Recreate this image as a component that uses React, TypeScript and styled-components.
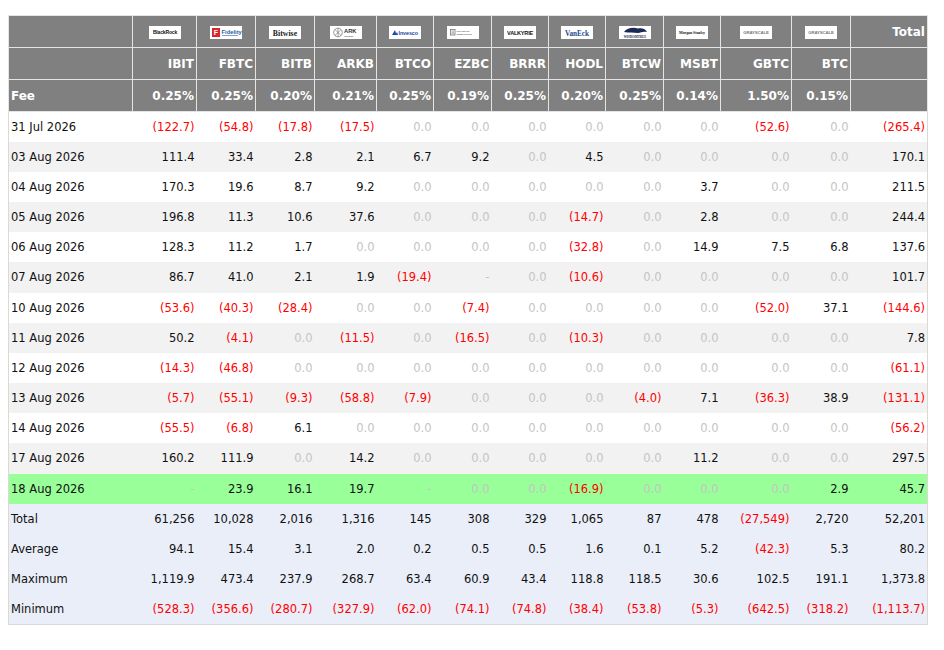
import React from 'react';
import styled, { createGlobalStyle } from 'styled-components';

type Tone = 'plain' | 'neg' | 'muted';
type RowKind = 'odd' | 'even' | 'today' | 'summary';

type Fund = {
  ticker: string;
  fee: string;
  logo: string;
  width: number;
};

const funds: Fund[] = [
  { ticker: 'IBIT', fee: '0.25%', logo: 'blackrock', width: 64 },
  { ticker: 'FBTC', fee: '0.25%', logo: 'fidelity', width: 59 },
  { ticker: 'BITB', fee: '0.20%', logo: 'bitwise', width: 59 },
  { ticker: 'ARKB', fee: '0.21%', logo: 'ark', width: 62 },
  { ticker: 'BTCO', fee: '0.25%', logo: 'invesco', width: 57 },
  { ticker: 'EZBC', fee: '0.19%', logo: 'franklin', width: 58 },
  { ticker: 'BRRR', fee: '0.25%', logo: 'valkyrie', width: 57 },
  { ticker: 'HODL', fee: '0.20%', logo: 'vaneck', width: 57 },
  { ticker: 'BTCW', fee: '0.25%', logo: 'wisdomtree', width: 58 },
  { ticker: 'MSBT', fee: '0.14%', logo: 'morgan', width: 57 },
  { ticker: 'GBTC', fee: '1.50%', logo: 'grayscale', width: 71 },
  { ticker: 'BTC', fee: '0.15%', logo: 'grayscale', width: 59 },
];

const rows: { label: string; kind: RowKind; values: string[] }[] = [
  { label: '31 Jul 2026', kind: 'odd', values: ['(122.7)', '(54.8)', '(17.8)', '(17.5)', '0.0', '0.0', '0.0', '0.0', '0.0', '0.0', '(52.6)', '0.0', '(265.4)'] },
  { label: '03 Aug 2026', kind: 'even', values: ['111.4', '33.4', '2.8', '2.1', '6.7', '9.2', '0.0', '4.5', '0.0', '0.0', '0.0', '0.0', '170.1'] },
  { label: '04 Aug 2026', kind: 'odd', values: ['170.3', '19.6', '8.7', '9.2', '0.0', '0.0', '0.0', '0.0', '0.0', '3.7', '0.0', '0.0', '211.5'] },
  { label: '05 Aug 2026', kind: 'even', values: ['196.8', '11.3', '10.6', '37.6', '0.0', '0.0', '0.0', '(14.7)', '0.0', '2.8', '0.0', '0.0', '244.4'] },
  { label: '06 Aug 2026', kind: 'odd', values: ['128.3', '11.2', '1.7', '0.0', '0.0', '0.0', '0.0', '(32.8)', '0.0', '14.9', '7.5', '6.8', '137.6'] },
  { label: '07 Aug 2026', kind: 'even', values: ['86.7', '41.0', '2.1', '1.9', '(19.4)', '-', '0.0', '(10.6)', '0.0', '0.0', '0.0', '0.0', '101.7'] },
  { label: '10 Aug 2026', kind: 'odd', values: ['(53.6)', '(40.3)', '(28.4)', '0.0', '0.0', '(7.4)', '0.0', '0.0', '0.0', '0.0', '(52.0)', '37.1', '(144.6)'] },
  { label: '11 Aug 2026', kind: 'even', values: ['50.2', '(4.1)', '0.0', '(11.5)', '0.0', '(16.5)', '0.0', '(10.3)', '0.0', '0.0', '0.0', '0.0', '7.8'] },
  { label: '12 Aug 2026', kind: 'odd', values: ['(14.3)', '(46.8)', '0.0', '0.0', '0.0', '0.0', '0.0', '0.0', '0.0', '0.0', '0.0', '0.0', '(61.1)'] },
  { label: '13 Aug 2026', kind: 'even', values: ['(5.7)', '(55.1)', '(9.3)', '(58.8)', '(7.9)', '0.0', '0.0', '0.0', '(4.0)', '7.1', '(36.3)', '38.9', '(131.1)'] },
  { label: '14 Aug 2026', kind: 'odd', values: ['(55.5)', '(6.8)', '6.1', '0.0', '0.0', '0.0', '0.0', '0.0', '0.0', '0.0', '0.0', '0.0', '(56.2)'] },
  { label: '17 Aug 2026', kind: 'even', values: ['160.2', '111.9', '0.0', '14.2', '0.0', '0.0', '0.0', '0.0', '0.0', '11.2', '0.0', '0.0', '297.5'] },
  { label: '18 Aug 2026', kind: 'today', values: ['-', '23.9', '16.1', '19.7', '-', '0.0', '0.0', '(16.9)', '0.0', '0.0', '0.0', '2.9', '45.7'] },
  { label: 'Total', kind: 'summary', values: ['61,256', '10,028', '2,016', '1,316', '145', '308', '329', '1,065', '87', '478', '(27,549)', '2,720', '52,201'] },
  { label: 'Average', kind: 'summary', values: ['94.1', '15.4', '3.1', '2.0', '0.2', '0.5', '0.5', '1.6', '0.1', '5.2', '(42.3)', '5.3', '80.2'] },
  { label: 'Maximum', kind: 'summary', values: ['1,119.9', '473.4', '237.9', '268.7', '63.4', '60.9', '43.4', '118.8', '118.5', '30.6', '102.5', '191.1', '1,373.8'] },
  { label: 'Minimum', kind: 'summary', values: ['(528.3)', '(356.6)', '(280.7)', '(327.9)', '(62.0)', '(74.1)', '(74.8)', '(38.4)', '(53.8)', '(5.3)', '(642.5)', '(318.2)', '(1,113.7)'] },
];

const toneOf = (v: string): Tone => {
  if (v.startsWith('(')) return 'neg';
  if (v === '0.0' || v === '-') return 'muted';
  return 'plain';
};

const rowBg: Record<RowKind, string> = {
  odd: '#ffffff',
  even: '#f2f2f2',
  today: '#99ff99',
  summary: '#eaeef8',
};

const toneColor: Record<Tone, string> = {
  plain: '#111111',
  neg: '#ff0000',
  muted: '#c4c4c4',
};

const GlobalStyle = createGlobalStyle`
  html, body {
    margin: 0;
    padding: 0;
    background: #ffffff;
  }
  body {
    font-family: "DejaVu Sans", Verdana, sans-serif;
  }
`;

const Page = styled.div`
  padding: 15px 0 0 8px;
`;

const Table = styled.table`
  width: 920px;
  table-layout: fixed;
  border-collapse: collapse;
  border: 1px solid #dcd9d2;
  font-size: 11.5px;
`;

const HeadRow = styled.tr`
  height: 32px;
`;

const HeadCell = styled.th<{ $align?: 'left' | 'right' | 'center' }>`
  background: #808080;
  color: #ffffff;
  font-size: 12px;
  font-weight: bold;
  text-align: ${(p) => p.$align || 'right'};
  padding: 0 2px;
  border: 1px solid #e4e4e4;
  white-space: nowrap;
`;

const LogoCell = styled(HeadCell)`
  padding: 1px 0 0;
  line-height: 0;
`;

const BodyRow = styled.tr<{ $kind: RowKind }>`
  height: 30.18px;
  background: ${(p) => rowBg[p.$kind]};
`;

const LabelCell = styled.td`
  text-align: left;
  padding: 0 2px;
  color: #111111;
  white-space: nowrap;
`;

const ValueCell = styled.td<{ $tone: Tone }>`
  text-align: right;
  padding: 0 2px;
  color: ${(p) => toneColor[p.$tone]};
  white-space: nowrap;
`;

const LogoSvg = styled.svg`
  display: inline-block;
  width: 32px;
  height: 13px;
`;

const Logo: React.FC<{ name: string }> = ({ name }) => {
  let art: React.ReactNode = null;
  switch (name) {
    case 'blackrock':
      art = (
        <text x="16" y="8.4" fontSize="5" fontWeight="bold" textAnchor="middle" fill="#111" fontFamily="Liberation Sans, sans-serif" letterSpacing="-0.15">
          BlackRock
        </text>
      );
      break;
    case 'fidelity':
      art = (
        <>
          <rect x="2" y="2" width="8" height="9" fill="#d9262c" />
          <text x="6" y="9.2" fontSize="7" fontWeight="bold" textAnchor="middle" fill="#fff" fontFamily="Liberation Sans, sans-serif">F</text>
          <text x="11.5" y="7.6" fontSize="5.8" fontWeight="bold" fill="#2a62a8" fontFamily="Liberation Sans, sans-serif">Fidelity</text>
          <rect x="12" y="9.2" width="16" height="0.6" fill="#2a62a8" />
        </>
      );
      break;
    case 'bitwise':
      art = (
        <text x="16" y="9.6" fontSize="7.8" textAnchor="middle" fill="#222" fontFamily="Liberation Serif, serif">
          Bitwise
        </text>
      );
      break;
    case 'ark':
      art = (
        <>
          <circle cx="8" cy="6.5" r="4.3" fill="none" stroke="#555" strokeWidth="0.6" />
          <path d="M5 9.5 L11 3.5 M5 3.5 L11 9.5 M8 2.2 V10.8" stroke="#555" strokeWidth="0.5" />
          <text x="14" y="6.8" fontSize="5.8" fill="#333" fontFamily="Liberation Sans, sans-serif">ARK</text>
          <text x="14.3" y="10.8" fontSize="2.5" fill="#555" fontFamily="Liberation Sans, sans-serif">INVEST</text>
        </>
      );
      break;
    case 'invesco':
      art = (
        <>
          <path d="M3 9 L6 4 L7.5 9 Z M6.2 9 L8 6 L9 9 Z" fill="#1c4aa8" />
          <text x="9.5" y="8.6" fontSize="5.4" fontWeight="bold" fill="#1c4aa8" fontFamily="Liberation Sans, sans-serif" letterSpacing="-0.1">Invesco</text>
        </>
      );
      break;
    case 'franklin':
      art = (
        <>
          <rect x="3.5" y="3.5" width="4.5" height="5.5" fill="none" stroke="#666" strokeWidth="0.7" />
          <path d="M4.5 5 H7 M4.5 6.3 H7 M4.5 7.6 H7" stroke="#666" strokeWidth="0.5" />
          <text x="9.5" y="5.8" fontSize="2.5" fill="#666" fontFamily="Liberation Sans, sans-serif">FRANKLIN</text>
          <text x="9.5" y="9" fontSize="2.5" fill="#666" fontFamily="Liberation Sans, sans-serif">TEMPLETON</text>
        </>
      );
      break;
    case 'valkyrie':
      art = (
        <text x="16" y="8.8" fontSize="5.6" fontWeight="bold" textAnchor="middle" fill="#111" fontFamily="Liberation Sans, sans-serif" letterSpacing="-0.25">
          VALKYRIE
        </text>
      );
      break;
    case 'vaneck':
      art = (
        <text x="16" y="9.5" fontSize="7.2" fontWeight="bold" textAnchor="middle" fill="#1d4b8f" fontFamily="Liberation Serif, serif">
          VanEck
        </text>
      );
      break;
    case 'wisdomtree':
      art = (
        <>
          <path d="M5 6 C8 1.5 15 1 19 2.5 C23 1.5 27 3.5 28 6 C24 5 22 6.5 19 7 C15 6.5 10 7 5 6 Z" fill="#1b2a55" />
          <text x="16" y="11.6" fontSize="3.2" textAnchor="middle" fill="#1b2a55" fontFamily="Liberation Serif, serif">WISDOMTREE</text>
        </>
      );
      break;
    case 'morgan':
      art = (
        <text x="16" y="8.2" fontSize="4" textAnchor="middle" fill="#222" fontFamily="Liberation Serif, serif" letterSpacing="-0.1">
          Morgan Stanley
        </text>
      );
      break;
    case 'grayscale':
      art = (
        <text x="16" y="8.3" fontSize="4.3" textAnchor="middle" fill="#7a7a7a" fontFamily="Liberation Sans, sans-serif" letterSpacing="-0.1">
          GRAYSCALE
        </text>
      );
      break;
  }
  return (
    <LogoSvg viewBox="0 0 32 13">
      <rect width="32" height="13" fill="#ffffff" />
      {art}
    </LogoSvg>
  );
};

export default function App() {
  return (
    <>
      <GlobalStyle />
      <Page>
        <Table>
          <colgroup>
            <col style={{ width: 124 }} />
            {funds.map((f, i) => (
              <col key={i} style={{ width: f.width }} />
            ))}
            <col style={{ width: 77 }} />
          </colgroup>
          <thead>
            <HeadRow>
              <HeadCell />
              {funds.map((f, i) => (
                <LogoCell key={i} $align="center">
                  <Logo name={f.logo} />
                </LogoCell>
              ))}
              <HeadCell>Total</HeadCell>
            </HeadRow>
            <HeadRow>
              <HeadCell />
              {funds.map((f) => (
                <HeadCell key={f.ticker}>{f.ticker}</HeadCell>
              ))}
              <HeadCell />
            </HeadRow>
            <HeadRow>
              <HeadCell $align="left">Fee</HeadCell>
              {funds.map((f) => (
                <HeadCell key={f.ticker}>{f.fee}</HeadCell>
              ))}
              <HeadCell />
            </HeadRow>
          </thead>
          <tbody>
            {rows.map((r) => (
              <BodyRow key={r.label} $kind={r.kind}>
                <LabelCell>{r.label}</LabelCell>
                {r.values.map((v, i) => (
                  <ValueCell key={i} $tone={r.kind === 'summary' && v === '0.0' ? 'plain' : toneOf(v)}>
                    {v}
                  </ValueCell>
                ))}
              </BodyRow>
            ))}
          </tbody>
        </Table>
      </Page>
    </>
  );
}
